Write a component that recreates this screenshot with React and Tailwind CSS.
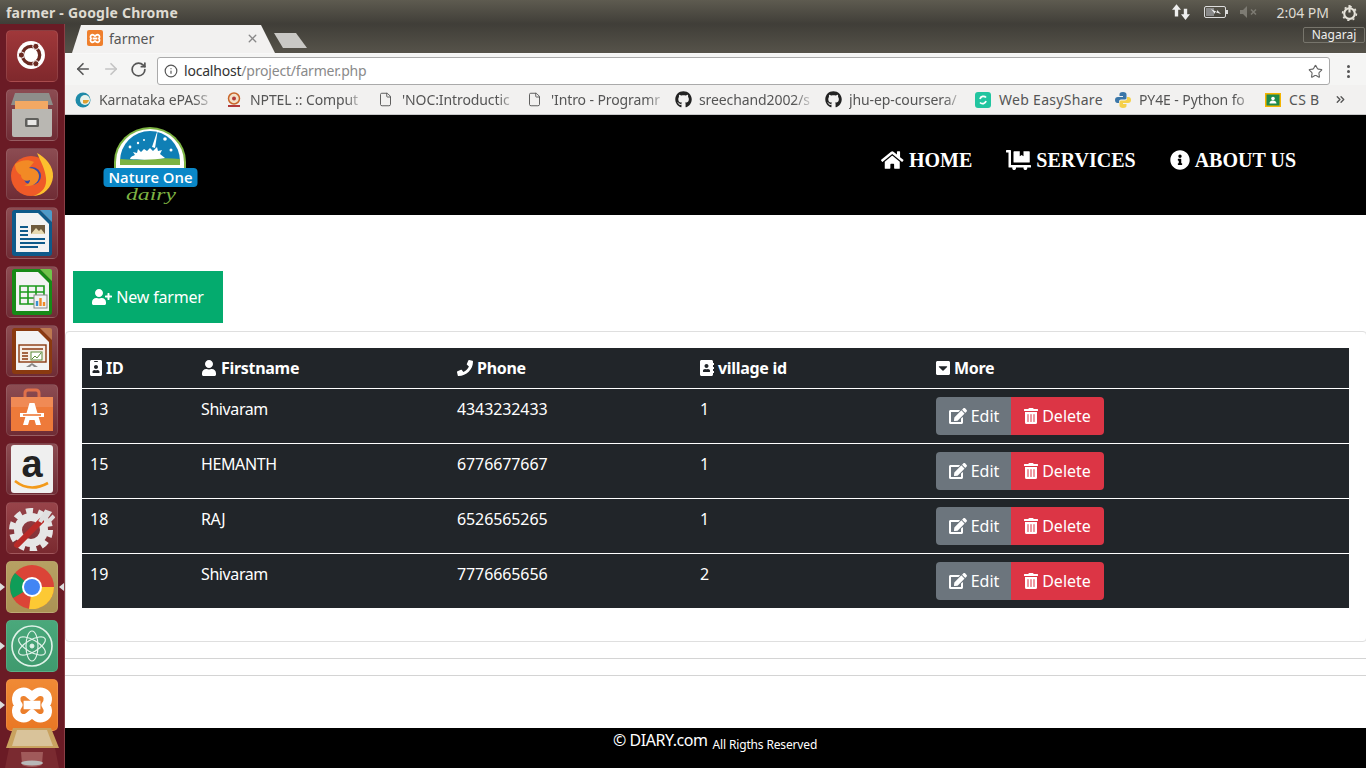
import { ArrowLeft, ArrowRight, RotateCw, Info, Star, File, ChevronsRight, X } from "lucide-react";
import {
  FaHome,
  FaDollyFlatbed,
  FaInfoCircle,
  FaUserPlus,
  FaIdBadge,
  FaUser,
  FaPhone,
  FaAddressBook,
  FaCaretSquareDown,
  FaEdit,
  FaTrashAlt,
  FaGithub,
} from "react-icons/fa";

const farmers = [
  { id: 13, name: "Shivaram", phone: "4343232433", village: 1 },
  { id: 15, name: "HEMANTH", phone: "6776677667", village: 1 },
  { id: 18, name: "RAJ", phone: "6526565265", village: 1 },
  { id: 19, name: "Shivaram", phone: "7776665656", village: 2 },
];

function XamppMark({ className, stroke = "#fff", width = 8 }) {
  return (
    <svg viewBox="0 0 40 36" className={className}>
      <path
        d="M9 6c5-2 8 1 11 4 3-3 6-6 11-4 5 2 5 8 2 12 3 4 3 10-2 12-5 2-8-1-11-4-3 3-6 6-11 4-5-2-5-8-2-12-3-4-3-10 2-12z M12 18h16"
        fill="none"
        stroke={stroke}
        strokeWidth={width}
        strokeLinejoin="round"
      />
    </svg>
  );
}

function Tile({ className = "from-[#8c4c52] to-[#6f2c35]", children }) {
  return (
    <div className={`relative flex h-[52px] w-[52px] shrink-0 items-center justify-center rounded-[5px] border border-white/10 bg-gradient-to-b ${className}`}>
      {children}
    </div>
  );
}

function DocIcon({ edge, corner, children }) {
  return (
    <svg viewBox="0 0 42 48" className="h-[48px] w-[42px]">
      <path d="M3 1h26l12 12v31a3 3 0 0 1-3 3H4a3 3 0 0 1-3-3V4a3 3 0 0 1 2-3z" fill={edge} />
      <path d="M5 4h22l11 11v28H5z" fill="#f3f3f3" />
      <path d="M29 1l12 12V3a2 2 0 0 0-2-2z" fill={corner} />
      {children}
    </svg>
  );
}

function Launcher() {
  return (
    <aside className="flex h-full w-[65px] shrink-0 flex-col gap-[7px] overflow-hidden border-r border-r-[#8a3f46] bg-[#6a1b25] pl-[6px] pt-[6px]">
      <Tile className="from-[#a0383a] to-[#7f282c]">
        <svg viewBox="0 0 52 52" className="h-full w-full">
          <circle cx="25" cy="25" r="14.500" fill="#fff" />
          <circle cx="25" cy="25" r="9" fill="none" stroke="#6a2a22" strokeWidth="3.5" />
          <circle cx="15" cy="25" r="3.200" fill="#6a2a22" stroke="#fff" />
          <circle cx="30" cy="16" r="3.200" fill="#6a2a22" stroke="#fff" />
          <circle cx="30" cy="34" r="3.200" fill="#6a2a22" stroke="#fff" />
        </svg>
      </Tile>
      <Tile>
        <svg viewBox="0 0 44 46" className="h-[46px] w-[44px]">
          <path d="M5 1h34l4 12H1z" fill="#8e8e8a" />
          <rect x="5" y="9" width="33" height="10" fill="#f2a863" />
          <path d="M2 17h40v26a2 2 0 0 1-2 2H4a2 2 0 0 1-2-2z" fill="#b9b7b2" />
          <rect x="15" y="26" width="14" height="9" rx="1.500" fill="#5f5f5c" />
          <rect x="17.500" y="28" width="9" height="5" fill="#e8e8e6" />
        </svg>
      </Tile>
      <Tile>
        <svg viewBox="0 0 46 46" className="h-[46px] w-[46px]">
          <circle cx="22" cy="25" r="20" fill="#ef5a28" />
          <path d="M28 2c8 4 17 13 16 24-1 10-9 19-20 19 10-3 14-10 13-18-1-9-5-16-9-25z" fill="#fcc02e" />
          <circle cx="23" cy="25" r="9" fill="#3a4aa6" />
          <path d="M6 13c6-4 13-5 19-2l-5 6c5 0 10 3 10 8 0 8-9 12-15 9 3 0 6-2 6-5-3 2-9 0-9-5-4-2-6-6-6-11z" fill="#f28a25" />
        </svg>
      </Tile>
      <Tile>
        <DocIcon edge="#0e5a8a" corner="#4d9ac8">
          <rect x="20" y="16" width="14" height="9" fill="#6e5b3e" />
          <path d="M20 25l5-6 3 3 2-2 4 5z" fill="#e6d9b0" />
          <path d="M9 18h8M9 22h8M9 26h8M9 30h25M9 34h25M9 38h18" stroke="#0e5a8a" strokeWidth="2" />
        </DocIcon>
      </Tile>
      <Tile>
        <DocIcon edge="#178a17" corner="#6fc44a">
          <path d="M9 18h24v18H9zM9 24h24M9 30h24M17 18v18M25 18v18" fill="none" stroke="#1b9a1b" strokeWidth="1.600" />
          <rect x="23" y="27" width="13" height="13" fill="#f3f3f3" stroke="#888" />
          <path d="M29.500 38v-8M33 38v-4" strokeWidth="2.400" stroke="#f08a2a" />
          <path d="M26 38v-5" strokeWidth="2.400" stroke="#3b8ed0" />
        </DocIcon>
      </Tile>
      <Tile>
        <DocIcon edge="#8a3a10" corner="#bd7850">
          <rect x="8" y="18" width="27" height="17" fill="#f6efe8" stroke="#8a3a10" strokeWidth="1.400" />
          <path d="M11 22h21M11 26h6M11 29h6M11 32h6" stroke="#8a3a10" strokeWidth="1.600" />
          <rect x="20" y="25" width="11" height="8" fill="#fff" stroke="#5b8a3a" />
          <path d="M21 32l3-3 2 2 4-5" fill="none" stroke="#5b8a3a" />
          <path d="M21 36l-6 4h4l2-2 2 2h4z" fill="#888" />
        </DocIcon>
      </Tile>
      <Tile>
        <svg viewBox="0 0 44 46" className="h-[46px] w-[44px]">
          <path d="M15 12V6a3 3 0 0 1 3-3h8a3 3 0 0 1 3 3v6" fill="none" stroke="#e0704a" strokeWidth="3" />
          <path d="M1 10h42v34H1z" fill="#ee7a3a" />
          <path d="M1 10h42v10H1z" fill="#f08a55" />
          <path d="M19.500 16h5L31 38h-5l-1.500-5h-5L18 38h-5z" fill="#fff" />
          <rect x="10" y="26" width="24" height="4" fill="#fff" />
          <rect x="13" y="27.200" width="18" height="1.600" fill="#ee7a3a" />
        </svg>
      </Tile>
      <Tile>
        <div className="flex h-[48px] w-[42px] flex-col items-center rounded-[3px] bg-[#efefef]">
          <span className="font-['Liberation_Sans',sans-serif] text-[38px] font-bold leading-[38px] text-[#222]">a</span>
          <svg viewBox="0 0 36 10" className="-mt-[3px] w-[36px]">
            <path d="M1 1c10 8 22 8 33 2" fill="none" stroke="#f39a1a" strokeWidth="2.600" />
          </svg>
        </div>
      </Tile>
      <Tile className="from-[#98444a] to-[#7a2a30]">
        <svg viewBox="0 0 46 46" className="h-[46px] w-[46px]">
          <circle cx="22" cy="25" r="13" fill="none" stroke="#e6e6e6" strokeWidth="8" />
          <circle cx="22" cy="25" r="19" fill="none" stroke="#e6e6e6" strokeWidth="6" strokeDasharray="7 5" />
          <path d="M8 40l24-24" stroke="#b92a28" strokeWidth="6" strokeLinecap="round" />
          <path d="M31 17l6-10 3 1-4 6 4 2 5-5" fill="none" stroke="#e0e0e0" strokeWidth="4" />
        </svg>
      </Tile>
      <div className="relative">
        <Tile className="from-[#b7a063] to-[#ab9354]">
          <svg viewBox="0 0 44 44" className="h-[44px] w-[44px]">
            <circle cx="22" cy="22" r="22" fill="#db4437" />
            <path d="M22 22L3 33A22 22 0 0 1 5 8z" fill="#0f9d58" />
            <path d="M22 22h22a22 22 0 0 1-25 22z" fill="#fcc934" />
            <circle cx="22" cy="22" r="10" fill="#fff" />
            <circle cx="22" cy="22" r="8" fill="#4285f4" />
          </svg>
        </Tile>
        <span className="absolute left-[-6px] top-[22px] h-0 w-0 border-y-[4px] border-l-[5px] border-y-transparent border-l-[#ddd]" />
        <span className="absolute left-[53px] top-[22px] h-0 w-0 border-y-[4px] border-r-[5px] border-y-transparent border-r-[#ddd]" />
      </div>
      <div className="relative">
        <Tile className="from-[#4aa87b] to-[#3f9a6e]">
          <svg viewBox="0 0 44 44" fill="none" stroke="#dff2e8" className="h-[44px] w-[44px]">
            <circle cx="22" cy="22" r="20" strokeWidth="1.600" />
            <ellipse cx="22" cy="22" rx="15" ry="6" strokeWidth="1.200" transform="rotate(30 22 22)" />
            <ellipse cx="22" cy="22" rx="15" ry="6" strokeWidth="1.200" transform="rotate(-30 22 22)" />
            <ellipse cx="22" cy="22" rx="15" ry="6" strokeWidth="1.200" transform="rotate(90 22 22)" />
            <circle cx="22" cy="22" r="2" fill="#dff2e8" />
          </svg>
        </Tile>
        <span className="absolute left-[-6px] top-[22px] h-0 w-0 border-y-[4px] border-l-[5px] border-y-transparent border-l-[#ddd]" />
      </div>
      <div className="relative">
        <Tile className="from-[#f08a35] to-[#e97724]">
          <XamppMark className="h-[38px] w-[42px]" />
        </Tile>
        <span className="absolute left-[-6px] top-[22px] h-0 w-0 border-y-[4px] border-l-[5px] border-y-transparent border-l-[#ddd]" />
      </div>
      <div className="relative -mt-[10px] shrink-0">
        <svg viewBox="0 0 60 40" className="h-[40px] w-[60px] -ml-[3px]">
          <path d="M10 0h38l8 20H3z" fill="#c9a25f" />
          <path d="M14 2h30l6 16H9z" fill="#d9c39a" />
          <path d="M6 20h46l4 20H2z" fill="#7a2a30" />
          <path d="M18 24h22l-1 12a10 3 0 0 1-20 0z" fill="#a05a5a" />
          <ellipse cx="29" cy="35" rx="11" ry="2.500" fill="#b8b8b8" />
        </svg>
      </div>
    </aside>
  );
}

function Favicon({ kind }) {
  if (kind === "doc") return <File className="h-[15px] w-[15px] text-[#555]" strokeWidth={1.5} />;
  if (kind === "github") return <FaGithub className="h-[17px] w-[17px] text-[#222]" />;
  if (kind === "epass")
    return (
      <svg viewBox="0 0 16 16" className="h-4 w-4">
        <circle cx="8" cy="8" r="7.500" fill="#1f8aa8" />
        <circle cx="10" cy="8" r="5" fill="#e8f2ec" />
        <path d="M8 8h6a4 4 0 0 1-6 3z" fill="#e0a030" />
      </svg>
    );
  if (kind === "nptel")
    return (
      <svg viewBox="0 0 16 16" className="h-4 w-4">
        <circle cx="8" cy="6.500" r="5.500" fill="#f3e1c8" stroke="#c9662a" strokeWidth="1.500" />
        <circle cx="8" cy="6.500" r="2" fill="#b23a3a" />
        <rect x="2" y="13" width="12" height="2" fill="#b23a3a" />
      </svg>
    );
  if (kind === "share")
    return (
      <svg viewBox="0 0 16 16" className="h-4 w-4">
        <rect width="16" height="16" rx="3" fill="#22c5a0" />
        <path d="M11 5.500A3.500 3.500 0 0 0 5 7M5 10.500A3.500 3.500 0 0 0 11 9" fill="none" stroke="#fff" strokeWidth="1.800" />
      </svg>
    );
  if (kind === "python")
    return (
      <svg viewBox="0 0 16 16" className="h-4 w-4">
        <path d="M8 0C5 0 4.500 1 4.500 2.500V4H8v1H3C1 5 0 6.200 0 8s1 3 2.500 3H4V9.500C4 8.300 5 7.500 6 7.500h4c1 0 1.500-.8 1.500-1.700V2.500C11.500 1 10.500 0 8 0z" fill="#3a76a8" />
        <path d="M8 16c3 0 3.500-1 3.500-2.500V12H8v-1h5c2 0 3-1.200 3-3s-1-3-2.500-3H12v1.500C12 7.700 11 8.500 10 8.500H6c-1 0-1.500.8-1.500 1.700v3.300C4.500 15 5.500 16 8 16z" fill="#f5d04a" />
      </svg>
    );
  return (
    <svg viewBox="0 0 16 16" className="h-4 w-4">
      <rect width="16" height="14" y="1" fill="#f5b400" />
      <rect x="1.500" y="2.500" width="13" height="11" fill="#1f8a4c" />
      <circle cx="8" cy="6.500" r="1.800" fill="#fff" />
      <path d="M4.500 11.500c0-4 7-4 7 0z" fill="#fff" />
    </svg>
  );
}

const bookmarks = [
  { kind: "epass", label: "Karnataka ePASS", w: "w-[151px]", fade: true },
  { kind: "nptel", label: "NPTEL :: Comput", w: "w-[152px]", fade: true },
  { kind: "doc", label: "'NOC:Introductic", w: "w-[149px]", fade: true },
  { kind: "doc", label: "'Intro - Programr", w: "w-[148px]", fade: true },
  { kind: "github", label: "sreechand2002/s", w: "w-[150px]", fade: true },
  { kind: "github", label: "jhu-ep-coursera/", w: "w-[150px]", fade: true },
  { kind: "share", label: "Web EasyShare", w: "w-[140px]", fade: false },
  { kind: "python", label: "PY4E - Python fo", w: "w-[150px]", fade: true },
  { kind: "classroom", label: "CS B", w: "w-[64px]", fade: false },
];

function BrowserChrome() {
  return (
    <>
      <div className="flex h-[29px] items-end bg-gradient-to-b from-[#403e38] to-[#56534a] pl-[7px]">
        <div className="flex h-[28px] w-[203px] items-center gap-[6px] bg-[#f2f1f0] pb-[2px] pl-[15px] pr-[16px] [clip-path:polygon(0_100%,9px_0,189px_0,100%_100%)]">
          <div className="flex h-[16px] w-[16px] shrink-0 items-center justify-center rounded-[2px] bg-[#ef7f2c]">
            <XamppMark className="h-[11px] w-[12px]" width={6} />
          </div>
          <span className="flex-1 text-[14px] text-[#555]">farmer</span>
          <X className="h-[13px] w-[13px] text-[#888]" strokeWidth={2.5} />
        </div>
        <div className="mb-[5px] ml-[-1px] h-[15px] w-[33px] bg-[#c9c8c5] [clip-path:polygon(0_0,22px_0,100%_100%,9px_100%)]" />
      </div>
      <div className="flex h-[32px] items-start border-t border-t-[#f8f8f8] bg-[#f5f5f4] pt-[3px]">
        <div className="flex w-[92px] shrink-0 items-center pl-[9px] pt-[3px]">
          <ArrowLeft className="h-[18px] w-[18px] text-[#555]" strokeWidth={2.2} />
          <ArrowRight className="ml-[10px] h-[18px] w-[18px] text-[#c4c4c4]" strokeWidth={2.2} />
          <RotateCw className="ml-[10px] h-[17px] w-[17px] text-[#555]" strokeWidth={2.4} />
        </div>
        <div className="flex h-[28px] w-[1173px] shrink-0 items-center rounded-[3px] border border-[#aaaaaa] bg-white pl-[6px] pr-[6px]">
          <Info className="h-[14px] w-[14px] text-[#555]" strokeWidth={2} />
          <span className="mb-[2px] ml-[6px] flex-1 text-[14px] tracking-[-0.2px] text-[#333]">
            localhost<span className="text-[#8a8a8a]">/project/farmer.php</span>
          </span>
          <Star className="h-[15px] w-[15px] text-[#666]" strokeWidth={1.8} />
        </div>
        <div className="flex flex-1 justify-center pt-[8px]">
          <div className="flex flex-col gap-[2px]">
            <span className="h-[3px] w-[3px] rounded-full bg-[#555]" />
            <span className="h-[3px] w-[3px] rounded-full bg-[#555]" />
            <span className="h-[3px] w-[3px] rounded-full bg-[#555]" />
          </div>
        </div>
      </div>
      <div className="flex h-[30px] items-center border-b border-b-[#c8c8c8] bg-[#f2f1f0] pl-[10px]">
        {bookmarks.map((b, i) => (
          <div key={i} className={`flex shrink-0 items-center ${b.w}`}>
            <span className="flex w-[24px] shrink-0 justify-start">
              <Favicon kind={b.kind} />
            </span>
            <span
              className={`whitespace-nowrap text-[14px] text-[#555] ${
                b.fade
                  ? "w-[116px] tracking-[-0.1px] [mask-image:linear-gradient(to_right,black_82%,transparent)]"
                  : "tracking-[0.3px]"
              }`}
            >
              {b.label}
            </span>
          </div>
        ))}
        <ChevronsRight className="ml-[5px] h-[13px] w-[13px] text-[#555]" strokeWidth={2.5} />
      </div>
    </>
  );
}

function NatureOneLogo() {
  return (
    <svg viewBox="0 0 95 78" className="h-[78px] w-[95px]">
      <path d="M11 44V36a36 35 0 0 1 72 0v8z" fill="#7db343" />
      <path d="M13 44V36a34 33 0 0 1 68 0v8z" fill="#fff" />
      <path d="M17 35a30 30 0 0 1 60 0z" fill="#0f7fb5" />
      <path d="M17 33c10 1 20 1 30 0 10-1 20-1 30 0v6H17z" fill="#7db343" />
      <path d="M27 33c1-3 3-3 5-4l-2-3 4 1 1-4 3 3 3-3 3 2 3-3 3 3 4-4 1 4 4-1-2 4 5 4c-10 2-25 2-35 1z" fill="#fff" />
      <path d="M55 3l-3 19-3-1z" fill="#fff" />
      <circle cx="27" cy="21" r="1.400" fill="#fff" />
      <circle cx="35" cy="17" r="1.200" fill="#fff" />
      <circle cx="41" cy="14" r="1" fill="#fff" />
      <circle cx="62" cy="13" r="1.800" fill="#fff" />
      <circle cx="68" cy="24" r="1.500" fill="#fff" />
      <rect x="0.500" y="42" width="94" height="19" rx="4" fill="#0a87c7" />
      <text x="47.500" y="57" textAnchor="middle" fontFamily="'Open Sans',sans-serif" fontSize="15" fontWeight="600" fill="#fff" textLength="84" lengthAdjust="spacingAndGlyphs">
        Nature One
      </text>
      <text x="48" y="74" textAnchor="middle" fontFamily="'Liberation Serif',serif" fontSize="17" fontStyle="italic" fill="#7db343" textLength="50" lengthAdjust="spacingAndGlyphs">
        dairy
      </text>
    </svg>
  );
}

function NavLink({ icon: Icon, label, iconClass }) {
  return (
    <a className="flex items-center gap-[5px] font-['Liberation_Serif',serif] text-[20px] font-bold text-white">
      <Icon className={`h-[20px] shrink-0 ${iconClass}`} />
      {label}
    </a>
  );
}

function Th({ icon: Icon, label, iconClass }) {
  return (
    <th className="h-[40px] px-[8px] text-left align-middle text-[16px] font-bold tracking-[-0.3px]">
      <span className="flex items-center gap-[4px]">
        <Icon className={`h-[16px] shrink-0 ${iconClass}`} />
        {label}
      </span>
    </th>
  );
}

export default function App() {
  return (
    <div className="flex h-[768px] w-[1366px] flex-col overflow-hidden bg-white font-['Noto_Sans',sans-serif]">
      <div className="flex h-[24px] shrink-0 items-center bg-gradient-to-b from-[#5e5b50] to-[#403e38] pl-[6px] pr-[8px] text-[#dfdbd2]">
        <span className="flex-1 text-[14px] font-bold tracking-[0.2px]">farmer - Google Chrome</span>
        <svg viewBox="0 0 16 16" className="mr-[14px] h-[18px] w-[18px]" fill="#eee">
          <path d="M4 1l4 5H5.500v6h-3V6H0zM12 15l-4-5h2.500V5h3v5H16z" />
        </svg>
        <svg viewBox="0 0 24 12" className="mr-[12px] h-[12px] w-[24px]" fill="none">
          <rect x="0.500" y="0.500" width="21" height="11" rx="1.500" stroke="#ddd" />
          <rect x="2" y="2" width="8" height="8" fill="#888" />
          <path d="M7 3l6 3 0-2 4 4-6-2 0 2z" fill="#eee" />
          <rect x="22" y="4" width="2" height="4" fill="#ddd" />
        </svg>
        <svg viewBox="0 0 18 12" className="mr-[18px] h-[12px] w-[18px]" fill="#7d7b73">
          <path d="M0 4h3l4-4v12L3 8H0z" />
          <path d="M11 3.500l5 5M16 3.500l-5 5" stroke="#7d7b73" strokeWidth="1.500" />
        </svg>
        <span className="mr-[12px] text-[14px] text-[#dfdbd2]">2:04 PM</span>
        <svg viewBox="0 0 16 16" className="h-[17px] w-[17px]" fill="none" stroke="#e6e3da">
          <circle cx="8" cy="9" r="5" strokeWidth="2" />
          <circle cx="8" cy="9" r="6.500" strokeWidth="1.500" strokeDasharray="2 3.100" />
          <path d="M8 1v7" strokeWidth="2" />
        </svg>
      </div>
      <div className="flex min-h-0 flex-1">
        <Launcher />
        <div className="relative flex min-w-0 flex-1 flex-col">
          <BrowserChrome />
          <span className="absolute right-[1px] top-[3px] flex h-[16px] w-[62px] items-center justify-center rounded-[2px] border border-[#77756c] text-[12px] text-[#eeeeee]">
            Nagaraj
          </span>
          <main className="flex min-h-0 flex-1 flex-col overflow-hidden">
            <header className="flex h-[100px] shrink-0 items-center justify-between bg-black pl-[38px] pr-[70px]">
              <NatureOneLogo />
              <nav className="mb-[10px] flex items-center gap-[34px]">
                <NavLink icon={FaHome} label="HOME" iconClass="w-[22.5px]" />
                <NavLink icon={FaDollyFlatbed} label="SERVICES" iconClass="w-[25px]" />
                <NavLink icon={FaInfoCircle} label="ABOUT US" iconClass="w-[20px]" />
              </nav>
            </header>
            <div className="ml-[8px] mt-[56px] flex h-[52px] w-[150px] shrink-0 items-center justify-center gap-[4px] bg-[#04ab6e] text-[16px] tracking-[-0.2px] text-white">
              <FaUserPlus className="h-[16px] w-[20px]" />
              New farmer
            </div>
            <section className="mr-[-1px] mt-[8px] h-[311px] shrink-0 rounded-[4px] border border-[#dfdfdf] px-[16px] pt-[16px]">
              <table className="w-[1267px] table-fixed bg-[#212529] text-[16px] text-white">
                <colgroup>
                  <col className="w-[111px]" />
                  <col className="w-[256px]" />
                  <col className="w-[243px]" />
                  <col className="w-[236px]" />
                  <col className="w-[421px]" />
                </colgroup>
                <thead>
                  <tr>
                    <Th icon={FaIdBadge} label="ID" iconClass="w-[12px]" />
                    <Th icon={FaUser} label="Firstname" iconClass="w-[16px]" />
                    <Th icon={FaPhone} label="Phone" iconClass="w-[16px]" />
                    <Th icon={FaAddressBook} label="village id" iconClass="w-[14px]" />
                    <Th icon={FaCaretSquareDown} label="More" iconClass="w-[14px]" />
                  </tr>
                </thead>
                <tbody>
                  {farmers.map((f) => (
                    <tr key={f.id} className="border-t border-t-white">
                      <td className="h-[55px] px-[8px] pb-[22px] pt-[8px] align-top leading-[24px]">{f.id}</td>
                      <td className="px-[8px] pt-[8px] align-top leading-[24px] tracking-[-0.4px]">{f.name}</td>
                      <td className="px-[8px] pt-[8px] align-top leading-[24px] tracking-[-0.1px]">{f.phone}</td>
                      <td className="px-[8px] pt-[8px] align-top leading-[24px]">{f.village}</td>
                      <td className="px-[8px] pt-[8px] align-top">
                        <div className="flex h-[38px]">
                          <button className="flex w-[75px] items-center justify-center gap-[4px] rounded-l-[4px] bg-[#6c757d] pl-[1px] text-white">
                            <FaEdit className="h-[16px] w-[18px]" />
                            Edit
                          </button>
                          <button className="flex w-[93px] items-center justify-center gap-[4px] rounded-r-[4px] bg-[#dc3545] text-white">
                            <FaTrashAlt className="h-[16px] w-[14px]" />
                            Delete
                          </button>
                        </div>
                      </td>
                    </tr>
                  ))}
                </tbody>
              </table>
            </section>
            <hr className="mt-[16px] border-t border-t-[#d4d4d4]" />
            <hr className="mt-[16px] border-t border-t-[#d4d4d4]" />
            <footer className="mt-auto flex h-[40px] shrink-0 items-start bg-black pl-[548px] text-white">
              <span className="text-[16px] leading-[24px] tracking-[-0.45px]">© DIARY.com</span>
              <span className="ml-[5px] mt-[5px] text-[12px] leading-[24px] tracking-[-0.15px]">All Rigths Reserved</span>
            </footer>
          </main>
        </div>
      </div>
    </div>
  );
}
